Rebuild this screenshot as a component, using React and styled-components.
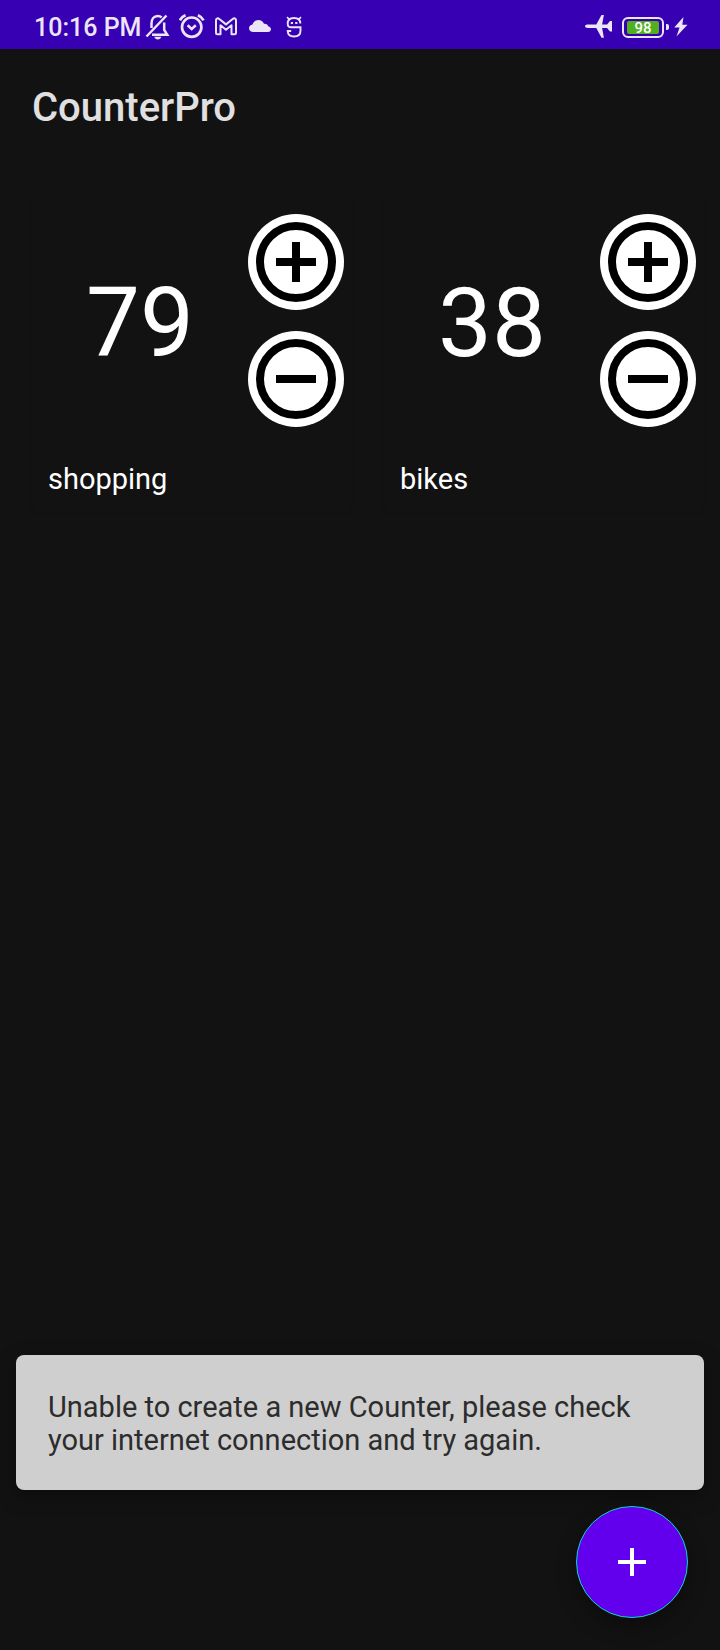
import React, { useState } from 'react';
import styled, { createGlobalStyle } from 'styled-components';

const GlobalStyle = createGlobalStyle`
  * { box-sizing: border-box; }
  body {
    margin: 0;
    background: #121212;
    font-family: Roboto, "Liberation Sans", sans-serif;
  }
`;

const Screen = styled.div`
  display: flex;
  flex-direction: column;
  min-height: 100vh;
  color: #fff;
`;

const StatusBar = styled.header`
  display: flex;
  align-items: center;
  justify-content: space-between;
  height: 49px;
  padding: 5px 32px 0;
  background: #3700b3;
  color: #ebe5f7;
`;

const StatusGroup = styled.div`
  display: flex;
  align-items: center;
  gap: ${(p) => p.$gap}px;
`;

const Clock = styled.time`
  padding: 2px 0 0 2px;
  font-size: 25px;
  font-weight: 500;
  line-height: 28px;
  white-space: nowrap;
`;

const StatusIcon = styled.svg`
  display: block;
  width: ${(p) => p.$width || 26}px;
  height: 26px;
  fill: none;
  stroke: currentColor;
`;

const Battery = styled.div`
  display: flex;
  align-items: center;
  gap: 2px;

  &::after {
    content: "";
    width: 3px;
    height: 6px;
    border-radius: 0 2px 2px 0;
    background: currentColor;
  }
`;

const BatteryBody = styled.div`
  padding: 2px 3px;
  border: 2px solid currentColor;
  border-radius: 6px;
`;

const BatteryLevel = styled.div`
  width: 32px;
  height: 13px;
  border-radius: 2px;
  background: #50b01e;
  color: #fff;
  font-size: 15px;
  font-weight: 500;
  line-height: 14px;
  text-align: center;
`;

const AppBar = styled.div`
  display: flex;
  align-items: center;
  height: 112px;
  padding: 6px 32px 0;
`;

const Title = styled.h1`
  margin: 0;
  color: #e0e0e0;
  font-size: 40px;
  font-weight: 500;
  line-height: 48px;
`;

const CounterGrid = styled.main`
  flex: 1;
  display: grid;
  grid-template-columns: 1fr 1fr;
  align-content: start;
  gap: 32px;
  padding: 32px 16px 32px 32px;
`;

const CounterCard = styled.section`
  display: flex;
  flex-direction: column;
  gap: 36px;
  padding: 21px 8px 17px 16px;
  border-radius: 8px;
  box-shadow: 0 1px 2px rgba(0, 0, 0, 0.15);
`;

const CounterBody = styled.div`
  display: flex;
  align-items: center;
`;

const Count = styled.output`
  flex: 1;
  padding: 4px 16px 0 0;
  font-size: 96px;
  line-height: 112px;
  text-align: center;
`;

const Steppers = styled.div`
  display: flex;
  flex-direction: column;
  gap: 21px;
`;

const StepButton = styled.button`
  display: block;
  width: 96px;
  height: 96px;
  padding: 0;
  border: 0;
  border-radius: 50%;
  background: #fff;
  cursor: pointer;

  svg {
    display: block;
  }
`;

const CounterName = styled.h2`
  margin: 0;
  font-size: 29px;
  font-weight: 400;
  line-height: 33px;
`;

const BottomArea = styled.footer`
  display: flex;
  flex-direction: column;
  gap: 16px;
  padding: 0 16px 32px;
`;

const Snackbar = styled.div`
  padding: 36px 32px 33px;
  border-radius: 8px;
  background: #cfcfcf;
  color: #2c2c2c;
  box-shadow: 0 6px 20px rgba(0, 0, 0, 0.35);
  font-size: 29px;
  line-height: 33px;
`;

const AddButton = styled.button`
  align-self: flex-end;
  display: flex;
  align-items: center;
  justify-content: center;
  width: 112px;
  height: 112px;
  margin-right: 16px;
  padding: 0;
  border: 1px solid #03dac5;
  border-radius: 50%;
  background: #6200ee;
  box-shadow: 0 8px 20px rgba(0, 0, 0, 0.35);
  cursor: pointer;
`;

function StepIcon({ plus }) {
  return (
    <svg width="96" height="96" viewBox="0 0 96 96" aria-hidden="true">
      <circle cx="48" cy="48" r="36" fill="none" stroke="#000" strokeWidth="8" />
      <path d={plus ? 'M28 48h40M48 28v40' : 'M28 48h40'} stroke="#000" strokeWidth="8" />
    </svg>
  );
}

function Counter({ name, initial }) {
  const [count, setCount] = useState(initial);
  return (
    <CounterCard>
      <CounterBody>
        <Count>{count}</Count>
        <Steppers>
          <StepButton type="button" aria-label={`Increase ${name}`} onClick={() => setCount(count + 1)}>
            <StepIcon plus />
          </StepButton>
          <StepButton type="button" aria-label={`Decrease ${name}`} onClick={() => setCount(count - 1)}>
            <StepIcon />
          </StepButton>
        </Steppers>
      </CounterBody>
      <CounterName>{name}</CounterName>
    </CounterCard>
  );
}

const BellOffIcon = () => (
  <StatusIcon viewBox="0 0 26 26" aria-hidden="true">
    <path d="M6.500 14V9.500C6.500 5 9 2 12.700 2c1.600 0 3 .5 4 1.400M19.200 8.500V16l3 4.700H7" strokeWidth="2.500" />
    <path d="M1.500 22.500L21.500 1.500" strokeWidth="2.500" />
    <path d="M9.300 22.800h7c-.5 1.800-1.800 2.700-3.500 2.700s-3-.9-3.500-2.700z" fill="currentColor" stroke="none" />
  </StatusIcon>
);

const AlarmIcon = () => (
  <StatusIcon viewBox="0 0 26 26" aria-hidden="true">
    <circle cx="12.700" cy="13.200" r="9.700" strokeWidth="2.700" />
    <path d="M.9 6.300C2 4 3.800 2.300 6.500 1.200M24.500 6.300C23.400 4 21.600 2.300 18.900 1.200" strokeWidth="2.700" />
    <path d="M8.600 11.300l4.100 3.600 4.100-3.600" strokeWidth="2.600" />
  </StatusIcon>
);

const MailIcon = () => (
  <StatusIcon viewBox="0 0 26 26" aria-hidden="true">
    <path
      d="M3 6.200C3 4.200 5 3.900 6.300 5l6.700 5.400L19.700 5C21 3.900 23 4.200 23 6.200V19c0 .8-.5 1.300-1.300 1.300h-3.200V11.300L13 15.700l-5.500-4.400v9H4.300C3.500 20.300 3 19.800 3 19z"
      strokeWidth="2"
      strokeLinejoin="round"
    />
  </StatusIcon>
);

const CloudIcon = () => (
  <StatusIcon viewBox="0 0 26 26" aria-hidden="true">
    <path
      d="M6.400 18C3.800 18 2 16.500 2 14.200c0-2 1.500-3.500 3.500-3.700C6.300 7.800 8.600 6 11.300 6c2.600 0 4.800 1.500 5.700 3.800 2.300-.2 4 1 4.400 2.700 1.500.2 2.600 1.300 2.600 2.700 0 1.600-1.300 2.800-3 2.800z"
      fill="currentColor"
      stroke="none"
    />
  </StatusIcon>
);

const MascotIcon = () => (
  <StatusIcon viewBox="0 0 26 26" aria-hidden="true">
    <path
      d="M19.300 9.500C19.300 5.800 16.700 4 13 4S6.700 5.800 6.700 9.500c0 2.400 1.300 3.800 3.300 3.800h9.500v3.500c0 3.600-2.300 5.700-6.400 5.700s-6.300-2.100-6.400-5.500h3.500"
      strokeWidth="1.900"
    />
    <path d="M6 3.200l2.800 2.600M20 3.200l-2.800 2.600" strokeWidth="1.600" />
    <path d="M9.800 9h2.200M14.200 9h2.200" strokeWidth="2.200" />
  </StatusIcon>
);

const PlaneIcon = () => (
  <StatusIcon $width={32} viewBox="0 0 32 26" aria-hidden="true">
    <path
      d="M0 12.200c0-1 1.300-1.700 3-1.700h8.300L16.500 1h2.400l-1.800 9.500h5L25 7h2v10.400h-2l-2.900-3.500h-5l1.800 9.900h-2.400l-5.200-9.900H3c-1.700 0-3-.700-3-1.700z"
      fill="currentColor"
      stroke="none"
    />
  </StatusIcon>
);

const BoltIcon = () => (
  <StatusIcon $width={14} viewBox="0 0 14 26" aria-hidden="true">
    <path d="M9.500 3L.2 13.600h5.300L2.500 22.500l11-11.700H8.300z" fill="currentColor" stroke="none" />
  </StatusIcon>
);

const counters = [
  { name: 'shopping', initial: 79 },
  { name: 'bikes', initial: 38 },
];

export default function App() {
  return (
    <Screen>
      <GlobalStyle />
      <StatusBar>
        <StatusGroup $gap={4}>
          <Clock dateTime="22:16">10:16 PM</Clock>
          <StatusGroup $gap={8}>
            <BellOffIcon />
            <AlarmIcon />
            <MailIcon />
            <CloudIcon />
            <MascotIcon />
          </StatusGroup>
        </StatusGroup>
        <StatusGroup $gap={5}>
          <PlaneIcon />
          <Battery>
            <BatteryBody>
              <BatteryLevel>98</BatteryLevel>
            </BatteryBody>
          </Battery>
          <BoltIcon />
        </StatusGroup>
      </StatusBar>
      <AppBar>
        <Title>CounterPro</Title>
      </AppBar>
      <CounterGrid>
        {counters.map((c) => (
          <Counter key={c.name} {...c} />
        ))}
      </CounterGrid>
      <BottomArea>
        <Snackbar role="status">
          Unable to create a new Counter, please check your internet connection and try again.
        </Snackbar>
        <AddButton type="button" aria-label="Add counter">
          <svg width="28" height="28" viewBox="0 0 28 28" aria-hidden="true">
            <path d="M0 14h28M14 0v28" stroke="#fff" strokeWidth="4" />
          </svg>
        </AddButton>
      </BottomArea>
    </Screen>
  );
}
